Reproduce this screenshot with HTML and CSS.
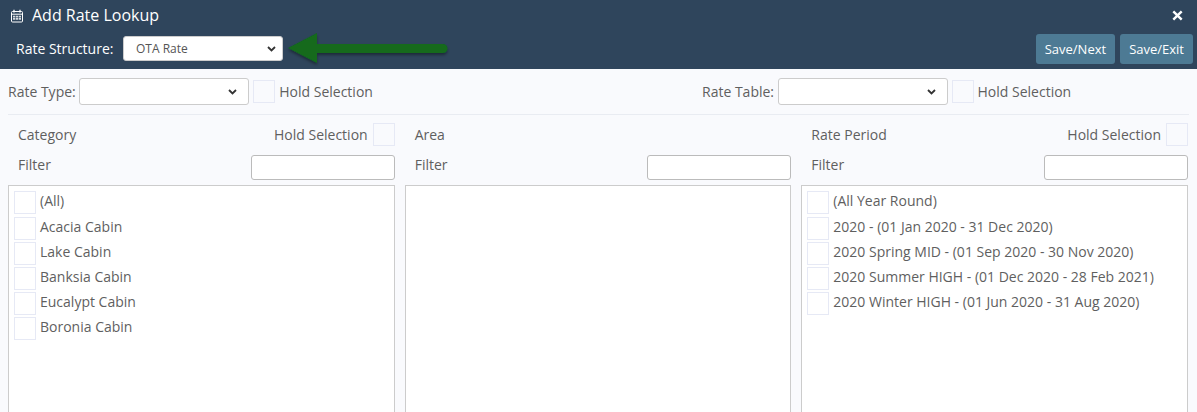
FILE: index.html
```html
<!DOCTYPE html>
<html lang="en">
<head>
    <meta charset="UTF-8">
    <title>Add Rate Lookup</title>
    <link rel="stylesheet" href="styles.css">
</head>
<body>
    <div class="header">
        <div class="title-row">
            <h1 class="title">
                <svg class="title-icon" viewBox="0 0 14 14" width="14" height="14">
                    <path d="M1.5 3.5a1 1 0 0 1 1-1h9a1 1 0 0 1 1 1v8.5a1 1 0 0 1-1 1h-9a1 1 0 0 1-1-1z" fill="none" stroke="#fff" stroke-width="1"/>
                    <path d="M1.5 5.2h11" stroke="#fff" stroke-width="1"/>
                    <path d="M4 .8v2.6M10 .8v2.6" stroke="#fff" stroke-width="1.3"/>
                    <path d="M3 6.8h2.3v1.6H3zM5.9 6.8h2.3v1.6H5.9zM8.8 6.8h2.2v1.6H8.8zM3 9.1h2.3v1.6H3zM5.9 9.1h2.3v1.6H5.9zM8.8 9.1h2.2v1.6H8.8z" fill="#fff" opacity="0.8"/>
                </svg>
                Add Rate Lookup
            </h1>
            <svg class="close-icon" viewBox="0 0 11 11" width="11" height="11">
                <path d="M1.3 1.3l8.4 8.4M9.7 1.3L1.3 9.7" stroke="#fff" stroke-width="2.4"/>
            </svg>
        </div>
        <div class="action-row">
            <label class="structure-label">Rate Structure:</label>
            <select class="structure-select">
                <option>OTA Rate</option>
            </select>
            <div class="buttons">
                <button>Save/Next</button>
                <button>Save/Exit</button>
            </div>
        </div>
        <!-- annotation arrow -->
        <svg class="arrow" viewBox="0 0 170 36" width="170" height="36">
            <defs>
                <filter id="arrowShadow" x="-10%" y="-20%" width="120%" height="150%">
                    <feDropShadow dx="0" dy="2" stdDeviation="1.5" flood-color="#000" flood-opacity="0.4"/>
                </filter>
            </defs>
            <path d="M2 15L31 0V11H157a4.5 4.5 0 0 1 0 9H31V30z" fill="#126a1c" filter="url(#arrowShadow)"/>
        </svg>
    </div>

    <div class="content">
        <div class="top-filters">
            <div class="top-group">
                <label>Rate Type:</label>
                <select class="top-select"><option></option></select>
                <span class="check"></span>
                <span>Hold Selection</span>
            </div>
            <div class="top-group">
                <label>Rate Table:</label>
                <select class="top-select"><option></option></select>
                <span class="check"></span>
                <span>Hold Selection</span>
            </div>
        </div>

        <div class="columns">
            <div class="column">
                <div class="column-head">
                    <span>Category</span>
                    <div class="hold">Hold Selection <span class="check"></span></div>
                </div>
                <div class="filter-row">
                    <span>Filter</span>
                    <input type="text">
                </div>
                <div class="list">
                    <div class="list-item"><span class="check"></span>(All)</div>
                    <div class="list-item"><span class="check"></span>Acacia Cabin</div>
                    <div class="list-item"><span class="check"></span>Lake Cabin</div>
                    <div class="list-item"><span class="check"></span>Banksia Cabin</div>
                    <div class="list-item"><span class="check"></span>Eucalypt Cabin</div>
                    <div class="list-item"><span class="check"></span>Boronia Cabin</div>
                </div>
            </div>
            <div class="column">
                <div class="column-head">
                    <span>Area</span>
                </div>
                <div class="filter-row">
                    <span>Filter</span>
                    <input type="text">
                </div>
                <div class="list"></div>
            </div>
            <div class="column">
                <div class="column-head">
                    <span>Rate Period</span>
                    <div class="hold">Hold Selection <span class="check"></span></div>
                </div>
                <div class="filter-row">
                    <span>Filter</span>
                    <input type="text">
                </div>
                <div class="list">
                    <div class="list-item"><span class="check"></span>(All Year Round)</div>
                    <div class="list-item"><span class="check"></span>2020 - (01 Jan 2020 - 31 Dec 2020)</div>
                    <div class="list-item"><span class="check"></span>2020 Spring MID - (01 Sep 2020 - 30 Nov 2020)</div>
                    <div class="list-item"><span class="check"></span>2020 Summer HIGH - (01 Dec 2020 - 28 Feb 2021)</div>
                    <div class="list-item"><span class="check"></span>2020 Winter HIGH - (01 Jun 2020 - 31 Aug 2020)</div>
                </div>
            </div>
        </div>
    </div>
</body>
</html>
```

FILE: styles.css
```css
* {
    margin: 0;
    padding: 0;
    box-sizing: border-box;
    font-family: 'Open Sans', sans-serif;
}

html, body {
    height: 412px;
    overflow: hidden;
}

body {
    background: #f9fafd;
    color: #5f5f5f;
    font-size: 14px;
}

/* Header */
.header {
    position: relative;
    height: 69px;
    background: #2f455c;
    color: #fff;
    padding: 0 4px 0 10px;
}

.title-row {
    display: flex;
    justify-content: space-between;
    align-items: center;
    height: 30px;
}

.title {
    display: flex;
    align-items: center;
    gap: 8px;
    font-size: 16px;
    font-weight: 400;
    color: #fff;
}

.title-icon {
    margin-top: 2px;
}

.close-icon {
    margin-right: 10px;
}

.action-row {
    display: flex;
    align-items: flex-start;
    height: 39px;
    padding-left: 6px;
}

.structure-label {
    width: 107px;
    margin-top: 6px;
    font-size: 14px;
    font-weight: 500;
    line-height: 25px;
    color: #fff;
}

select {
    appearance: none;
    background-color: #fff;
    background-repeat: no-repeat;
    background-image: url("data:image/svg+xml,%3Csvg xmlns='http://www.w3.org/2000/svg' width='9' height='6'%3E%3Cpath d='M1 1l3.5 3.5L8 1' fill='none' stroke='%23333' stroke-width='1.8'/%3E%3C/svg%3E");
    border: 1px solid #ccc;
    border-radius: 3px;
}

.structure-select {
    width: 160px;
    height: 25px;
    margin-top: 6px;
    padding-left: 12px;
    font-size: 12px;
    color: #555;
    background-position: right 6px center;
}

.buttons {
    display: flex;
    gap: 5px;
    margin-left: auto;
    margin-top: 4px;
}

button {
    height: 30px;
    padding: 0 9px;
    border: none;
    border-radius: 3px;
    background: #4d7a94;
    color: #fff;
    font-size: 13px;
    font-weight: 400;
}

.arrow {
    position: absolute;
    left: 286px;
    top: 33px;
}

/* Content */
.top-filters {
    display: grid;
    grid-template-columns: 694px 1fr;
    height: 46px;
    margin: 0 8px;
    align-items: center;
    border-bottom: 1px solid #e9ecf2;
}

.top-group {
    display: flex;
    align-items: center;
    line-height: 18px;
}

.top-group label {
    margin-right: 3.5px;
}

.top-select {
    width: 170px;
    height: 27px;
    margin-right: 4px;
    background-position: right 11px center;
}

.top-group .check {
    margin-right: 4px;
}

.check {
    display: inline-block;
    flex-shrink: 0;
    width: 22px;
    height: 23px;
    background: transparent;
    border: 1px solid #e6e9f5;
}

.columns {
    display: grid;
    grid-template-columns: repeat(3, 1fr);
    gap: 10px;
    margin: 0 9px 0 8px;
}

.column-head {
    display: flex;
    justify-content: space-between;
    align-items: center;
    height: 39px;
    padding-left: 10px;
}

.hold {
    display: flex;
    align-items: center;
    gap: 5px;
}

.filter-row {
    display: flex;
    justify-content: space-between;
    align-items: flex-start;
    height: 31px;
    padding: 1px 0 0 10px;
    line-height: 19px;
}

.filter-row input {
    width: 144px;
    height: 25px;
    background: #fff;
    border: 1px solid #bbb;
    border-radius: 3px;
}

.list {
    height: 240px;
    padding: 5.4px 0 0 5px;
    background: #fff;
    border: 1px solid #ccc;
}

.list-item {
    display: flex;
    align-items: flex-start;
    gap: 4px;
    height: 25.2px;
    line-height: 20px;
}
```
